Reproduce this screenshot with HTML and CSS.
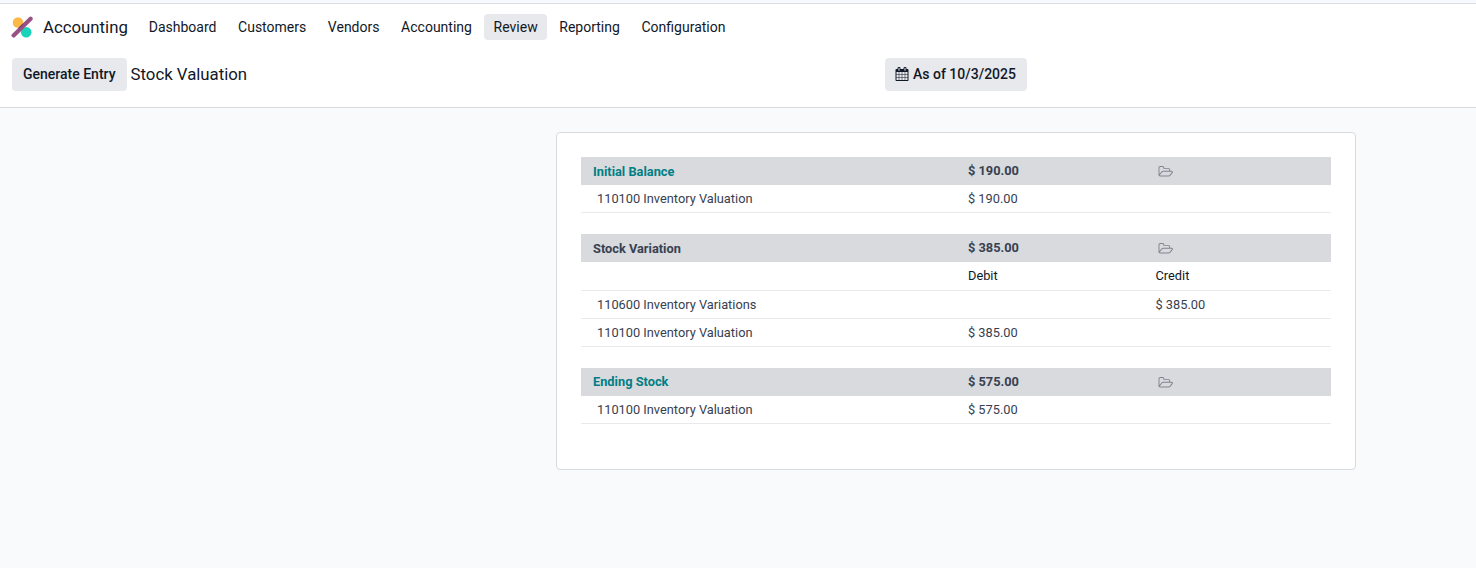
FILE: index.html
```html
<!DOCTYPE html>
<html lang="en">
<head>
<meta charset="utf-8">
<title>Stock Valuation</title>
<link rel="stylesheet" href="styles.css">
</head>
<body>
<svg class="symbols" aria-hidden="true">
  <symbol id="folder" viewBox="0 0 2048 1792"><path d="M1845 931q0-35-53-35h-1088q-40 0-85.500 21.500t-71.500 52.500l-294 363q-18 24-18 40 0 35 53 35h1088q40 0 86-22t71-53l294-363q18-22 18-39zm-1141-163h768v-160q0-40-28-68t-68-28h-576q-40 0-68-28t-28-68v-64q0-40-28-68t-68-28h-320q-40 0-68 28t-28 68v853l256-315q44-53 116-87.500t140-34.500zm1269 163q0 62-46 120l-295 363q-43 53-116 87.500t-140 34.500h-1088q-92 0-158-66t-66-158v-960q0-92 66-158t158-66h320q92 0 158 66t66 158v32h544q92 0 158 66t66 158v160h192q54 0 99 24.500t67 70.500q15 32 15 68z"/></symbol>
</svg>
<header class="header">
  <nav class="navbar">
    <svg class="logo" viewBox="0 0 22 22">
      <circle cx="7" cy="6.5" r="5.3" fill="#fbb945"/>
      <circle cx="15.2" cy="16.3" r="5.3" fill="#1ad3bb"/>
      <path d="M2.6 19.4L19.6 2.8" stroke="#985184" stroke-width="4.2" stroke-linecap="round"/>
      <path d="M6.9 12.2L12 7.2L12.3 8.6L8.6 12.4z" fill="#5b325c" opacity=".6"/>
    </svg>
    <span class="brand">Accounting</span>
    <a class="nav-item">Dashboard</a>
    <a class="nav-item">Customers</a>
    <a class="nav-item">Vendors</a>
    <a class="nav-item">Accounting</a>
    <a class="nav-item active">Review</a>
    <a class="nav-item">Reporting</a>
    <a class="nav-item">Configuration</a>
  </nav>
  <div class="control-panel">
    <div class="panel-left">
      <button class="btn">Generate Entry</button>
      <span class="title">Stock Valuation</span>
    </div>
    <button class="btn date">
      <svg class="calendar" viewBox="64 0 1664 1792"><path d="M192 1664h288v-288h-288v288zm352 0h320v-288h-320v288zm-352-352h288v-320h-288v320zm352 0h320v-320h-320v320zm-352-384h288v-288h-288v288zm736 736h320v-288h-320v288zm-384-736h320v-288h-320v288zm768 736h288v-288h-288v288zm-384-352h320v-320h-320v320zm-352-864v-288q0-13-9.500-22.500t-22.500-9.500h-64q-13 0-22.500 9.500t-9.500 22.500v288q0 13 9.500 22.500t22.500 9.500h64q13 0 22.500-9.500t9.500-22.500zm736 864h288v-320h-288v320zm-384-384h320v-288h-320v288zm384 0h288v-288h-288v288zm32-480v-288q0-13-9.500-22.500t-22.500-9.500h-64q-13 0-22.500 9.500t-9.500 22.500v288q0 13 9.500 22.500t22.500 9.500h64q13 0 22.500-9.500t9.500-22.500zm384-64v1280q0 52-38 90t-90 38h-1408q-52 0-90-38t-38-90v-1280q0-52 38-90t90-38h128v-96q0-66 47-113t113-47h64q66 0 113 47t47 113v96h384v-96q0-66 47-113t113-47h64q66 0 113 47t47 113v96h128q52 0 90 38t38 90z"/></svg>
      <span>As of 10/3/2025</span>
    </button>
  </div>
</header>
<main class="card">
  <section class="group">
    <div class="row head"><span class="name link">Initial Balance</span><span class="amount">$ 190.00</span><span><svg class="folder"><use href="#folder"/></svg></span></div>
    <div class="row"><span class="account">110100 Inventory Valuation</span><span>$ 190.00</span><span></span></div>
  </section>
  <section class="group">
    <div class="row head"><span class="name">Stock Variation</span><span class="amount">$ 385.00</span><span><svg class="folder"><use href="#folder"/></svg></span></div>
    <div class="row labels"><span></span><span>Debit</span><span>Credit</span></div>
    <div class="row"><span class="account">110600 Inventory Variations</span><span></span><span>$ 385.00</span></div>
    <div class="row"><span class="account">110100 Inventory Valuation</span><span>$ 385.00</span><span></span></div>
  </section>
  <section class="group ending">
    <div class="row head"><span class="name link">Ending Stock</span><span class="amount">$ 575.00</span><span><svg class="folder"><use href="#folder"/></svg></span></div>
    <div class="row"><span class="account">110100 Inventory Valuation</span><span>$ 575.00</span><span></span></div>
  </section>
</main>
</body>
</html>
```
FILE: styles.css
```css
* { box-sizing: border-box; }
body {
  margin: 0;
  min-height: 568px;
  background: #f9fafb;
  color: #111827;
  font: 14px/21px Roboto, sans-serif;
}
.symbols { display: none; }
.header {
  height: 108px;
  background: #fff;
  border-bottom: 1px solid #d8dadd;
}
.header::before {
  content: "";
  display: block;
  height: 3px;
  background: #f8f8ff;
  border-bottom: 1px solid #dddde8;
}
.navbar {
  display: flex;
  align-items: center;
  height: 46px;
  padding-left: 11px;
}
.logo { width: 22px; height: 22px; }
.brand { width: 96.2px; margin-left: 10px; font-size: 16.8px; }
.nav-item {
  height: 26px;
  margin-right: 2.65px;
  padding: 0 9.5px;
  line-height: 26px;
  border-radius: 4px;
}
.nav-item.active { background: #e7e9ed; }
.control-panel {
  display: flex;
  justify-content: space-between;
  margin-top: 8px;
  padding: 0 449px 0 12px;
}
.panel-left { display: flex; align-items: center; gap: 4px; }
.btn {
  display: flex;
  align-items: center;
  height: 33px;
  padding: 0 11px;
  border: 0;
  border-radius: 4px;
  background: #e7e9ed;
  color: #111827;
  font: 500 14px/21px Roboto, sans-serif;
}
.title { font-size: 16.8px; }
.date { gap: 4px; padding-left: 10px; }
.calendar { width: 14px; height: 14px; margin-bottom: 1px; fill: #111827; }
.card {
  width: 800px;
  height: 338px;
  margin: 24px 0 0 556px;
  padding: 24px;
  background: #fff;
  border: 1px solid #d8dadd;
  border-radius: 4px;
  color: #374151;
  font-size: 12.8px;
}
.group { margin-bottom: 21px; }
.row {
  display: grid;
  grid-template-columns: 375px 187.5px 187.5px;
  height: 28px;
  padding-left: 12px;
  line-height: 27px;
  border-bottom: 1px solid #e7e9ed;
}
.row.head { background: #d8dadd; border: 0; font-weight: 700; }
.head .name { line-height: 29px; }
.ending .name { line-height: 27px; }
.head .link { color: #017e84; }
.account { padding-left: 4px; }
.row.labels { height: 29px; color: #111827; }
.folder {
  display: block;
  width: 15.5px;
  height: 13.5px;
  margin: 7.5px 0 0 2px;
  fill: #7f858f;
}
```
